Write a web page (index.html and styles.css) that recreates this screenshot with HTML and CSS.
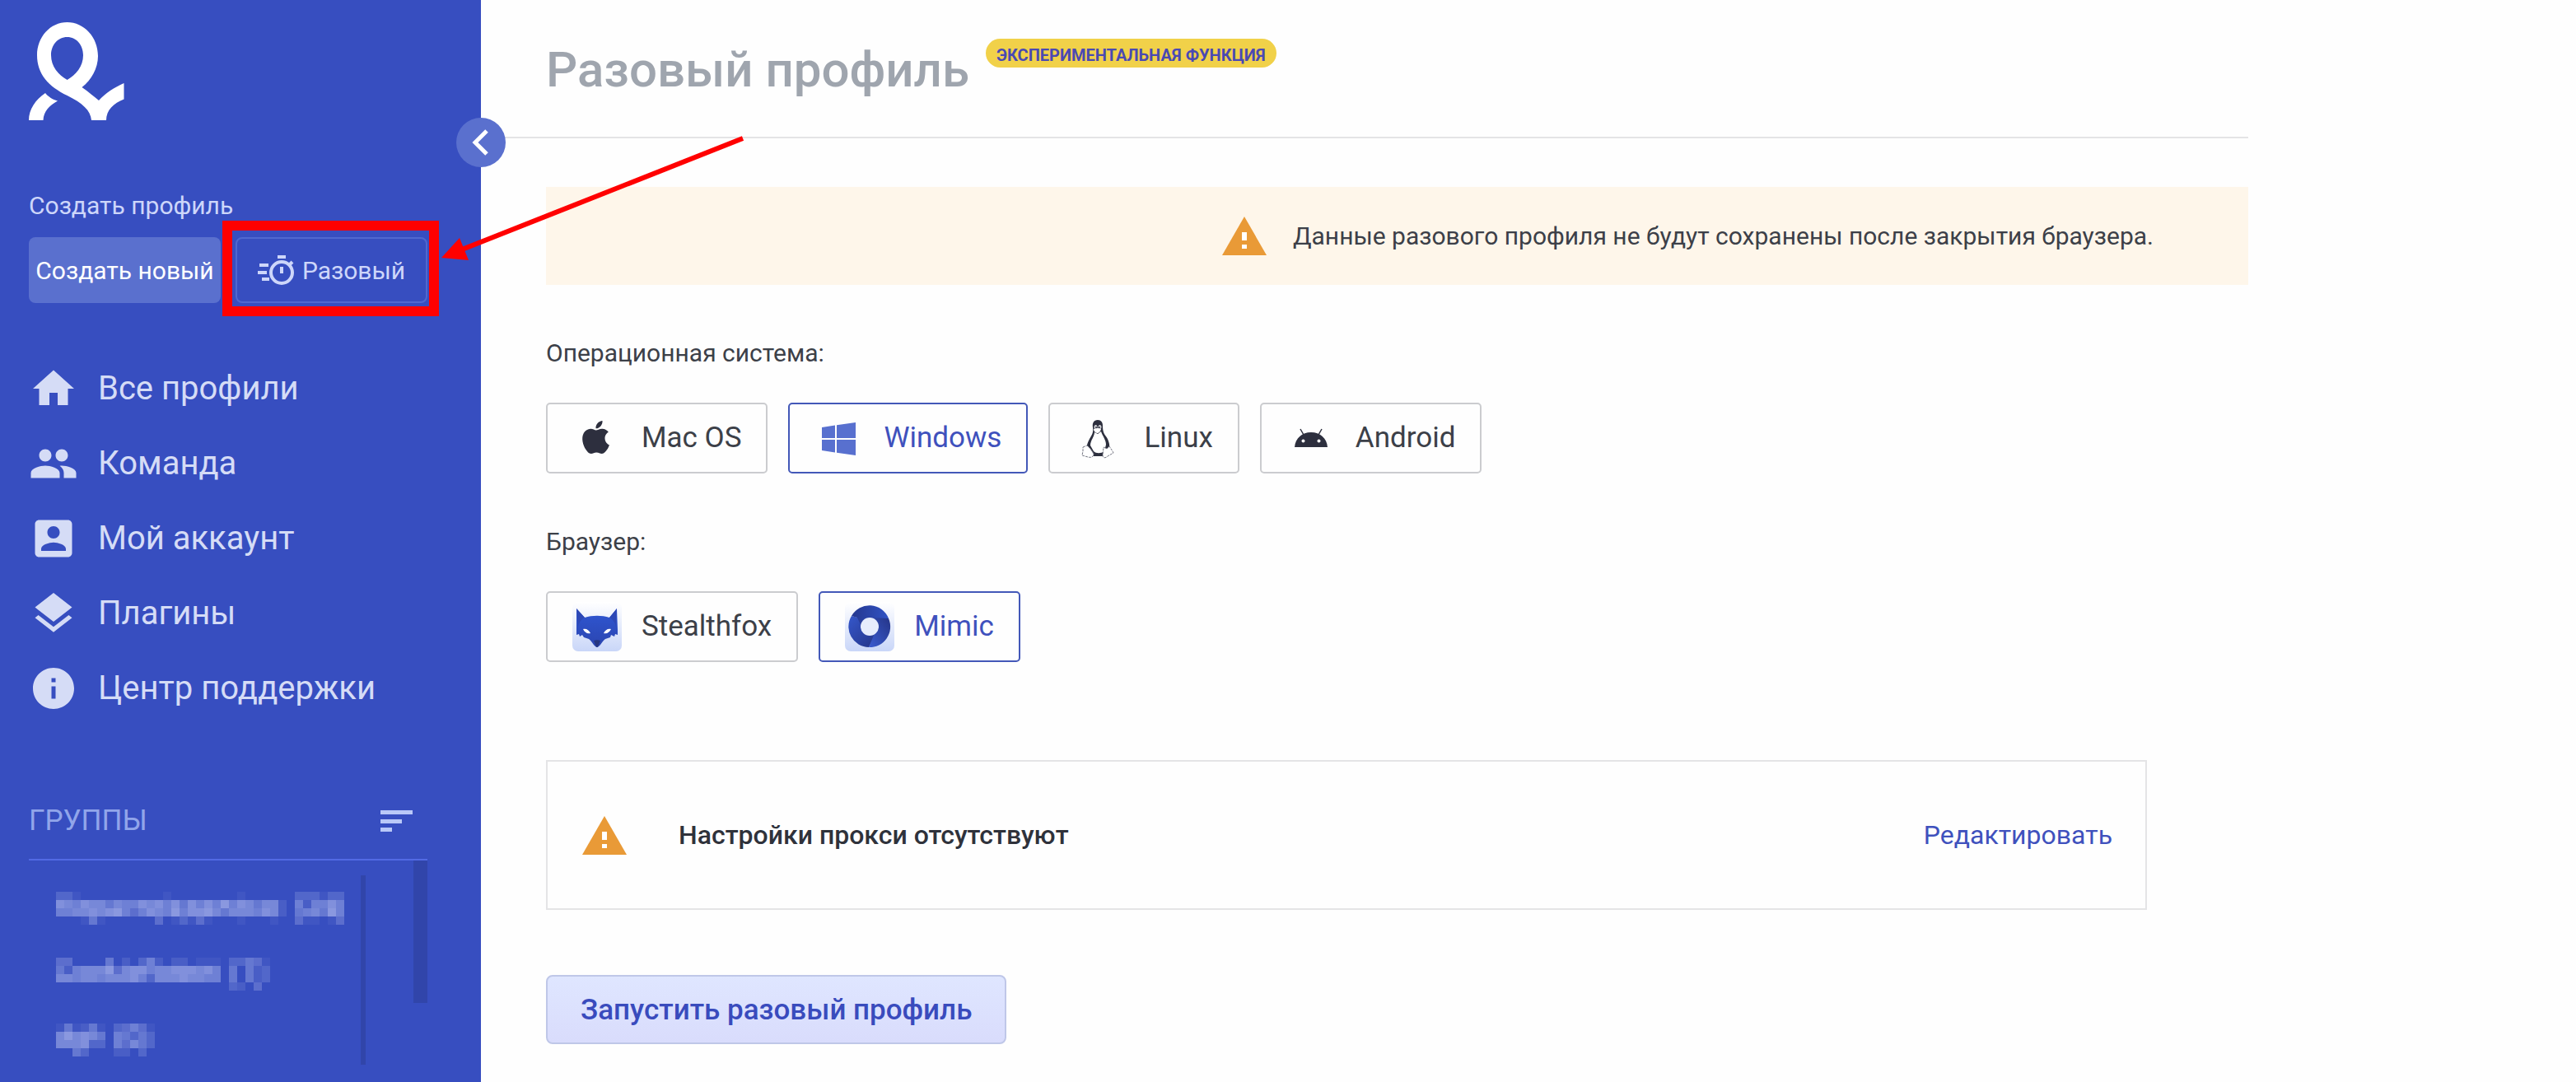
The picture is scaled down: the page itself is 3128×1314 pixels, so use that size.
FILE: index.html
```html
<!DOCTYPE html>
<html lang="ru">

<head>
    <meta charset="UTF-8">
    <meta name="viewport" content="width=device-width, initial-scale=1.0">
    <title>Разовый профиль</title>
    <link rel="stylesheet" href="styles.css">
</head>

<body>
    <div class="page">
        <aside class="sidebar">
            <a href="#" class="logo" aria-label="Главная">
                <svg width="116" height="120" viewBox="0 0 116 120" fill="#fff" fill-rule="evenodd">
                    <path d="M46.6 0C67 0 84 18 84 41C84 56 76 70 64.500 79C73 85 79 90 85 95C93 86 104 79 115.500 74V93.500C103 98 94 107 94 119H76C75 107 65 98 46.600 89C24 78 10 63 10 40C10 18 26 0 46.600 0ZM46.600 18C35 18 27 28 27 40C27 54 36 64 46.600 70C57 64 66 54 66 40C66 28 58 18 46.600 18Z" />
                    <path d="M20 86C23 90 29 94 35 95.500C25 101 18 108 17.500 119H0C0 106 8 94 20 86Z" />
                </svg>
            </a>

            <button class="toggle" aria-label="Свернуть меню">
                <svg width="60" height="60" viewBox="0 0 60 60" fill="none" stroke="#fff" stroke-width="5">
                    <path d="M37 16L23 30L37 44" />
                </svg>
            </button>

            <p class="create-label">Создать профиль</p>
            <div class="create-buttons">
                <button class="btn-new">Создать новый</button>
                <button class="btn-quick">
                    <svg width="46" height="36" viewBox="0 0 46 36" fill="none" stroke="#cdd6fa" stroke-width="4">
                        <circle cx="29" cy="21" r="13" />
                        <path d="M24 2H34M29 14V22M38 12L42 8" />
                        <path d="M2 12H13M0 21H11M5 29H14" />
                    </svg>
                    Разовый
                </button>
            </div>

            <nav class="menu">
                <a href="#">
                    <svg viewBox="0 0 24 24"><path d="M10 20v-6h4v6h5v-8h3L12 3 2 12h3v8z" /></svg>
                    Все профили
                </a>
                <a href="#">
                    <svg viewBox="0 0 24 24"><path d="M16 11c1.660 0 2.990-1.340 2.990-3S17.660 5 16 5s-3 1.340-3 3 1.340 3 3 3zm-8 0c1.660 0 2.990-1.340 2.990-3S9.660 5 8 5 5 6.340 5 8s1.340 3 3 3zm0 2c-2.330 0-7 1.170-7 3.500V19h14v-2.500c0-2.330-4.670-3.500-7-3.500zm8 0c-.29 0-.62.020-.97.050 1.160.84 1.970 1.970 1.970 3.450V19h6v-2.500c0-2.330-4.670-3.500-7-3.500z" /></svg>
                    Команда
                </a>
                <a href="#">
                    <svg viewBox="0 0 24 24"><path d="M3 5v14c0 1.100.89 2 2 2h14c1.100 0 2-.9 2-2V5c0-1.100-.9-2-2-2H5c-1.110 0-2 .9-2 2zm12 4c0 1.660-1.340 3-3 3s-3-1.340-3-3 1.340-3 3-3 3 1.340 3 3zm-9 8c0-2 4-3.100 6-3.100s6 1.100 6 3.100v1H6v-1z" /></svg>
                    Мой аккаунт
                </a>
                <a href="#">
                    <svg viewBox="0 0 24 24"><path d="M11.990 18.540l-7.370-5.730L3 14.070l9 7 9-7-1.630-1.270-7.380 5.740zM12 16l7.360-5.730L21 9l-9-7-9 7 1.630 1.270L12 16z" /></svg>
                    Плагины
                </a>
                <a href="#">
                    <svg viewBox="0 0 24 24"><path d="M12 2C6.480 2 2 6.480 2 12s4.480 10 10 10 10-4.480 10-10S17.520 2 12 2zm1 15h-2v-6h2v6zm0-8h-2V7h2v2z" /></svg>
                    Центр поддержки
                </a>
            </nav>

            <div class="groups-header">
                <span>ГРУППЫ</span>
                <button class="sort" aria-label="Сортировка">
                    <svg width="39" height="27" viewBox="0 0 39 27" fill="#b9c8f8">
                        <path d="M0 0H39V5H0ZM0 11H26V16H0ZM0 21H14V26H0Z" />
                    </svg>
                </button>
            </div>
            <div class="groups">
                <!-- group names are masked, script.js fills the blocks -->
                <ul class="group-list">
                    <li><svg class="masked" width="350" height="40" viewBox="0 0 35 4"></svg></li>
                    <li><svg class="masked" width="350" height="40" viewBox="0 0 35 4"></svg></li>
                    <li><svg class="masked" width="350" height="40" viewBox="0 0 35 4"></svg></li>
                </ul>
                <div class="scrollbar"></div>
            </div>
        </aside>

        <main class="content">
            <header class="page-header">
                <h1>Разовый профиль</h1>
                <span class="badge">ЭКСПЕРИМЕНТАЛЬНАЯ ФУНКЦИЯ</span>
            </header>

            <div class="body">
                <div class="notice">
                    <svg class="warning" width="54" height="47" viewBox="0 0 54 47">
                        <path d="M27 0L54 47H0Z" fill="#e99a37" />
                        <path d="M24 19H30V29H24ZM24 34H30V39H24Z" fill="#fff" />
                    </svg>
                    <p>Данные разового профиля не будут сохранены после закрытия браузера.</p>
                </div>

                <p class="field-label" id="osLabel">Операционная система:</p>
                <div class="options" role="radiogroup" aria-labelledby="osLabel">
                    <label class="option">
                        <input type="radio" name="os">
                        <svg viewBox="0 0 60 60" fill="#2d2f3e">
                            <path transform="translate(8.500 9) scale(1.670)" d="M12.152 6.896c-.948 0-2.415-1.078-3.960-1.040-2.040.027-3.910 1.183-4.961 3.014-2.117 3.675-.546 9.103 1.519 12.090 1.013 1.454 2.208 3.090 3.792 3.039 1.520-.065 2.090-.987 3.935-.987 1.831 0 2.350.987 3.960.948 1.637-.026 2.676-1.480 3.676-2.948 1.156-1.688 1.636-3.325 1.662-3.415-.039-.013-3.182-1.221-3.220-4.857-.026-3.040 2.480-4.494 2.597-4.559-1.429-2.090-3.623-2.324-4.390-2.376-2-.156-3.675 1.090-4.610 1.090zM15.530 3.830c.843-1.012 1.400-2.427 1.245-3.830-1.207.052-2.662.805-3.532 1.818-.780.896-1.454 2.338-1.273 3.714 1.338.104 2.715-.688 3.559-1.701" />
                        </svg>
                        Mac OS
                    </label>
                    <label class="option">
                        <input type="radio" name="os" checked>
                        <svg viewBox="0 0 60 60" fill="#5870cf">
                            <path d="M9 17L25 14.500V30H9ZM27 14.200L50 11V30H27ZM9 32H25V47.500L9 45ZM27 32H50V51L27 47.800Z" />
                        </svg>
                        Windows
                    </label>
                    <label class="option">
                        <input type="radio" name="os">
                        <svg viewBox="0 0 60 60">
                            <path d="M28 8C23 8 21 12 22 17C23 23 21 26 18 31C16 35 14 39 15 43L23 52H35L42 43C43 38 41 32 38 28C35 24 34 21 34 15C34 11 32 8 28 8Z" fill="#2d2f3e" />
                            <path d="M24 23L28 25L32 22C34 28 38 32 38 38L36 46C32 49 26 49 23 46L19 39C19 33 24 28 24 23Z" fill="#fff" />
                            <path d="M23 19C25 18 26 18 28 18C30 18 31 18 32 19C31 23 29 24 27 24C25 23 23 22 23 19Z" fill="#fff" />
                            <ellipse cx="25.500" cy="16.500" rx="2" ry="2.500" fill="#d8d8dc" />
                            <ellipse cx="30.500" cy="16.500" rx="2" ry="2.500" fill="#d8d8dc" />
                            <circle cx="26" cy="17" r="1" fill="#2d2f3e" />
                            <circle cx="30" cy="17" r="1" fill="#2d2f3e" />
                            <path d="M10 41L15 39L19 43L23 49C23 53 20 54 16 53L9 51L10 46Z" fill="#fff" stroke="#777985" stroke-dasharray="3 1" />
                            <path d="M35 41L39 43L42 40L46 46L47 48L40 52C37 55 34 54 34 51Z" fill="#fff" stroke="#777985" stroke-dasharray="3 1" />
                        </svg>
                        Linux
                    </label>
                    <label class="option">
                        <input type="radio" name="os">
                        <svg viewBox="0 0 60 60">
                            <path d="M10 41C11 30 19 23 30 23S49 30 50 41Z" fill="#2d2f3e" />
                            <path d="M17 19L21 26M43 19L39 26" stroke="#2d2f3e" stroke-width="1.500" />
                            <circle cx="20.500" cy="33.500" r="2" fill="#fff" />
                            <circle cx="39.500" cy="33.500" r="2" fill="#fff" />
                        </svg>
                        Android
                    </label>
                </div>

                <p class="field-label" id="browserLabel">Браузер:</p>
                <div class="options" role="radiogroup" aria-labelledby="browserLabel">
                    <label class="option">
                        <input type="radio" name="browser">
                        <svg viewBox="0 0 60 60">
                            <defs>
                                <linearGradient id="tile" x1="0" y1="0" x2="0" y2="1">
                                    <stop offset="0" stop-color="#fff" />
                                    <stop offset="1" stop-color="#c9d6f8" />
                                </linearGradient>
                                <linearGradient id="fox" x1="0" y1="0" x2="0" y2="1">
                                    <stop offset="0" stop-color="#2f57d3" />
                                    <stop offset="1" stop-color="#2b45b0" />
                                </linearGradient>
                            </defs>
                            <rect width="60" height="60" rx="7" fill="url(#tile)" />
                            <path d="M5 8L15 19C24 16 36 16 45 19L54 8L55 34L55 40L52 39L51 42L47 40L46 43L40 45C36 48 33 55 30 55S24 48 20 45L14 43L12 40L9 42L8 39L5 40Z" fill="url(#fox)" />
                            <path d="M5 8L15 19C11 21 8 25 7 30ZM54 8L45 19C49 21 52 25 53 30Z" fill="#2d48b6" />
                            <path d="M26 47C29 46 31 46 34 47C32 52 31 55 30 55S28 52 26 47Z" fill="#27367f" />
                            <path d="M13 33C17 32 20 34 22 38C18 39 15 37 13 33ZM47 33C43 32 40 34 38 38C42 39 45 37 47 33Z" fill="#fff" />
                        </svg>
                        Stealthfox
                    </label>
                    <label class="option">
                        <input type="radio" name="browser" checked>
                        <svg viewBox="0 0 60 60">
                            <defs>
                                <linearGradient id="ringLeft" x1="0" y1="0" x2="1" y2="1">
                                    <stop offset="0" stop-color="#3557cb" />
                                    <stop offset="1" stop-color="#253587" />
                                </linearGradient>
                                <linearGradient id="ringTop" x1="0" y1="0" x2="1" y2="0">
                                    <stop offset="0" stop-color="#24378f" />
                                    <stop offset="1" stop-color="#3153c4" />
                                </linearGradient>
                                <linearGradient id="ringRight" x1="1" y1="0" x2="0" y2="1">
                                    <stop offset="0" stop-color="#253587" />
                                    <stop offset="1" stop-color="#3a5bd0" />
                                </linearGradient>
                            </defs>
                            <rect width="60" height="60" rx="7" fill="url(#tile)" />
                            <path d="M8 17A25 25 0 0 0 29 55L38 38L20 33V20Z" fill="url(#ringLeft)" />
                            <path d="M8 17A25 25 0 0 1 53 20L38 20L20 30L15 19Z" fill="url(#ringTop)" />
                            <path d="M53 20A25 25 0 0 1 29 55L36 38L40 30L32 19Z" fill="url(#ringRight)" />
                            <circle cx="30" cy="30" r="11" fill="#e6ecfc" />
                        </svg>
                        Mimic
                    </label>
                </div>

                <div class="proxy">
                    <svg class="warning" width="54" height="47" viewBox="0 0 54 47">
                        <path d="M27 0L54 47H0Z" fill="#e99a37" />
                        <path d="M24 19H30V29H24ZM24 34H30V39H24Z" fill="#fff" />
                    </svg>
                    <strong>Настройки прокси отсутствуют</strong>
                    <a href="#">Редактировать</a>
                </div>

                <button class="btn-start">Запустить разовый профиль</button>
            </div>
        </main>

        <!-- highlight and arrow over the quick profile button -->
        <div class="highlight"></div>
        <svg class="arrow" width="380" height="160" viewBox="0 0 380 160">
            <path d="M371 3L30 138" stroke="#f00" stroke-width="6" />
            <path d="M5 148L27 124L38 151Z" fill="#f00" />
        </svg>
    </div>

    <script src="script.js"></script>
</body>

</html>
```
FILE: script.js
```js
// every digit is the strength of one block, 0 is empty
var names = [
    [
        '33100000000001000000001000000333133',
        '87687757668786858686968757720626686',
        '66778789646876968897577768720567596',
        '00015100000040131410001000100411014'
    ],
    [
        '44000050203620220111033541',
        '52677794788677888786050523',
        '77677677786377787766050523',
        '00000000000000000000032040'
    ],
    [
        '151251034641',
        '797875065353',
        '777833064753',
        '005300022030'
    ]
];

var masks = document.querySelectorAll('.masked');

names.forEach(function (rows, i) {
    rows.forEach(function (row, y) {
        row.split('').forEach(function (level, x) {
            if (level === '0') return;
            var rect = document.createElementNS('http://www.w3.org/2000/svg', 'rect');
            rect.setAttribute('x', x);
            rect.setAttribute('y', y);
            rect.setAttribute('width', 1);
            rect.setAttribute('height', 1);
            rect.setAttribute('fill-opacity', level / 10);
            masks[i].appendChild(rect);
        });
    });
});
```
FILE: styles.css
```css
* {
    box-sizing: border-box;
}

body {
    margin: 0;
    font-family: Roboto, "Liberation Sans", sans-serif;
    font-size: 30px;
    line-height: 40px;
    color: #3c4048;
    background-color: #fefefe;
}

p,
h1,
ul {
    margin: 0;
    padding: 0;
}

a {
    text-decoration: none;
}

button {
    font-family: inherit;
    font-size: 30px;
    padding: 0;
    border: none;
    background: none;
    cursor: pointer;
}

.page {
    position: relative;
    display: flex;
    min-height: 100vh;
}

.sidebar {
    position: relative;
    flex: 0 0 584px;
    padding: 27px 65px 20px 35px;
    background-color: #374ec0;
    color: #cdd6fa;
}

.logo,
.logo svg {
    display: block;
}

.toggle {
    position: absolute;
    top: 143px;
    right: -30px;
    width: 60px;
    height: 60px;
    border-radius: 50%;
    background-color: #5a70ce;
    z-index: 1;
}

.toggle svg {
    display: block;
}

.create-label {
    margin-top: 83px;
}

.create-buttons {
    display: grid;
    grid-template-columns: 1fr 1fr;
    gap: 18px;
    margin-top: 18px;
}

.create-buttons button {
    display: flex;
    align-items: center;
    justify-content: center;
    gap: 8px;
    height: 80px;
    border-radius: 8px;
    white-space: nowrap;
}

.create-buttons .btn-new {
    background-color: #5a70ce;
    color: #fff;
}

.create-buttons .btn-quick {
    border: 2px solid #5068d0;
    color: #cdd6fa;
}

.menu {
    margin-top: 58px;
}

.menu a {
    display: flex;
    align-items: center;
    gap: 24px;
    height: 91px;
    font-size: 40px;
    color: #d5dcf6;
}

.menu svg {
    width: 60px;
    height: 60px;
    fill: #d5dcf6;
}

.groups-header {
    display: flex;
    align-items: center;
    justify-content: space-between;
    height: 94px;
    margin-top: 70px;
    padding-right: 18px;
    border-bottom: 2px solid #526ae4;
    font-size: 35px;
    color: #91a5ea;
}

.sort svg {
    display: block;
}

.groups {
    display: flex;
    justify-content: space-between;
}

.group-list {
    display: grid;
    align-content: start;
    gap: 40px;
    width: 409px;
    height: 230px;
    margin-top: 18px;
    padding: 20px 0 0 33px;
    border-right: 6px solid #3145aa;
    list-style: none;
}

.masked {
    display: block;
    fill: #93a1e2;
    shape-rendering: crispEdges;
}

.scrollbar {
    width: 17px;
    height: 173px;
    background-color: #3145aa;
}

.content {
    flex: 1;
    min-width: 0;
    max-width: 2146px;
}

.page-header {
    display: flex;
    align-items: flex-start;
    gap: 20px;
    height: 168px;
    padding: 47px 0 0 79px;
    border-bottom: 2px solid #e4e4e6;
}

.page-header h1 {
    font-size: 60px;
    line-height: 76px;
    font-weight: 500;
    color: #9fa5ae;
}

.badge {
    height: 35px;
    padding: 0 13px;
    border-radius: 18px;
    background-color: #f1d149;
    color: #4a49b3;
    font-size: 20px;
    line-height: 41px;
    font-weight: 700;
    white-space: nowrap;
}

.body {
    padding: 59px 0 46px 79px;
}

.notice {
    display: flex;
    align-items: center;
    justify-content: flex-end;
    gap: 32px;
    min-height: 119px;
    padding: 0 115px 0 24px;
    background-color: #fef6ea;
}

.warning {
    flex: none;
}

.field-label {
    margin: 63px 0 40px;
}

.options {
    display: flex;
    flex-wrap: wrap;
    gap: 25px;
}

.option {
    display: flex;
    align-items: center;
    gap: 24px;
    height: 86px;
    padding: 0 30px;
    border: 2px solid #cbcccf;
    border-radius: 5px;
    font-size: 35px;
    cursor: pointer;
}

.option:has(input:checked) {
    border-color: #4358b8;
    color: #3f51bd;
}

.option input {
    position: absolute;
    opacity: 0;
}

.option svg {
    width: 60px;
    height: 60px;
}

.proxy {
    display: flex;
    align-items: center;
    max-width: 1944px;
    min-height: 182px;
    margin-top: 119px;
    padding: 0 40px 0 42px;
    border: 2px solid #e4e4e6;
    font-size: 32px;
}

.proxy strong {
    margin-left: 63px;
    font-weight: 500;
    color: #2f323b;
}

.proxy a {
    margin-left: auto;
    color: #3f51bd;
}

.btn-start {
    height: 84px;
    margin-top: 79px;
    padding: 0 40px;
    border: 2px solid #bfc7e8;
    border-radius: 8px;
    background: linear-gradient(#dfe6ff, #d9dcfc);
    color: #394bbd;
    font-size: 35px;
    font-weight: 500;
}

.highlight {
    position: absolute;
    top: 268px;
    left: 270px;
    width: 263px;
    height: 116px;
    border: 12px solid #f00;
}

.arrow {
    position: absolute;
    top: 165px;
    left: 531px;
    z-index: 2;
}

.highlight,
.arrow {
    pointer-events: none;
}
```
